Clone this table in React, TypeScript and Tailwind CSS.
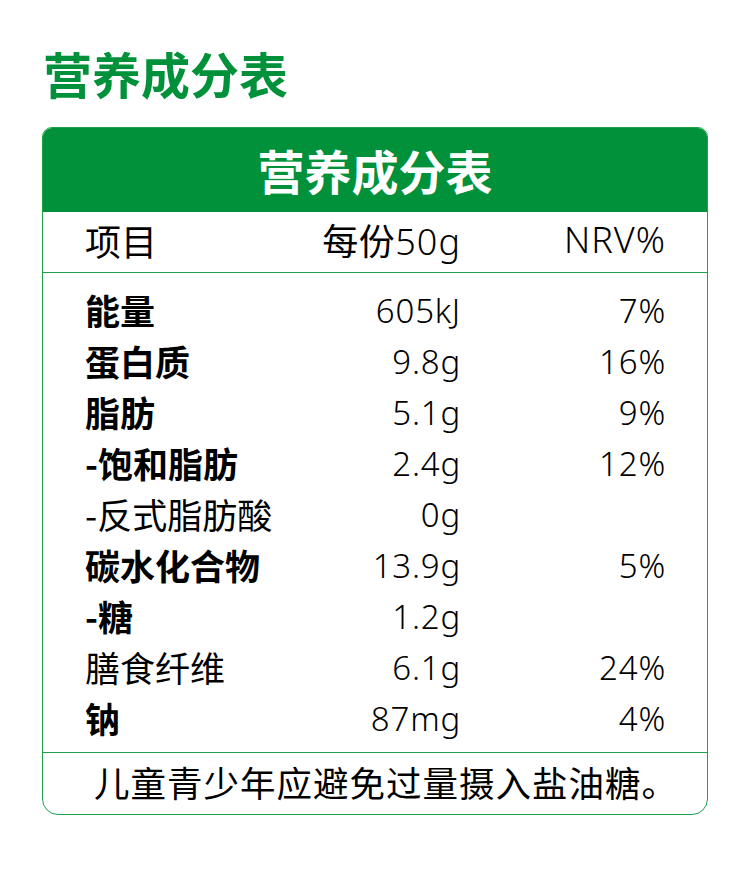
const rows = [
  { name: "能量", amount: "605kJ", nrv: "7%", bold: true },
  { name: "蛋白质", amount: "9.8g", nrv: "16%", bold: true },
  { name: "脂肪", amount: "5.1g", nrv: "9%", bold: true },
  { name: "-饱和脂肪", amount: "2.4g", nrv: "12%", bold: true },
  { name: "-反式脂肪酸", amount: "0g", nrv: "", bold: false },
  { name: "碳水化合物", amount: "13.9g", nrv: "5%", bold: true },
  { name: "-糖", amount: "1.2g", nrv: "", bold: true },
  { name: "膳食纤维", amount: "6.1g", nrv: "24%", bold: false },
  { name: "钠", amount: "87mg", nrv: "4%", bold: true }
];

const cjk = "font-['Noto_Sans_CJK_SC',sans-serif]";
const num = "font-['Noto_Sans','Noto_Sans_CJK_SC',sans-serif] font-light";

export default function App() {
  return (
    <div className="h-[870px] w-[750px] bg-white pl-[42px] pt-[40px]">
      <h1 className={`${cjk} pl-[1px] text-[49px] font-bold leading-[66px] text-[#00913a]`}>营养成分表</h1>

      <div className="mt-[21px] w-[666px] overflow-hidden rounded-t-[10px] rounded-b-[16px] border-[1.5px] border-[#1fa34a]">
        <div className={`${cjk} flex h-[84px] items-center justify-center bg-[#00913a] text-[47px] font-bold text-white`}>
          营养成分表
        </div>

        <div className="flex h-[61px] items-center whitespace-nowrap border-b-[1.5px] border-[#1fa34a] pb-[4px] pl-[42px] text-[36px] text-black">
          <span className={`${cjk} w-[200px]`}>项目</span>
          <span className={`${cjk} mr-[-1px] w-[176px] text-right tracking-[0.5px]`}>
            每份<span className="font-['Noto_Sans',sans-serif] font-light tracking-[1px]">50g</span>
          </span>
          <span className={`${num} mr-[-1px] w-[206px] text-right tracking-[1px]`}>NRV%</span>
        </div>

        <div className="pb-[8px] pt-[12px]">
          {rows.map((row) => (
            <div key={row.name} className="flex h-[51px] items-center whitespace-nowrap pl-[42px] text-black">
              <span className={`${cjk} w-[200px] text-[35px] ${row.bold ? "font-bold" : "font-normal"}`}>{row.name}</span>
              <span className={`${num} mr-[-1px] w-[176px] text-right text-[33px] tracking-[0.8px]`}>{row.amount}</span>
              <span className={`${num} mr-[-1px] w-[206px] text-right text-[33px] tracking-[0.8px]`}>{row.nrv}</span>
            </div>
          ))}
        </div>

        <div className={`${cjk} flex h-[62px] items-center justify-center border-t-[1.5px] border-[#1fa34a] pb-[4px] pl-[22px] text-[35.5px] tracking-[1px] text-black`}>
          儿童青少年应避免过量摄入盐油糖。
        </div>
      </div>
    </div>
  );
}
